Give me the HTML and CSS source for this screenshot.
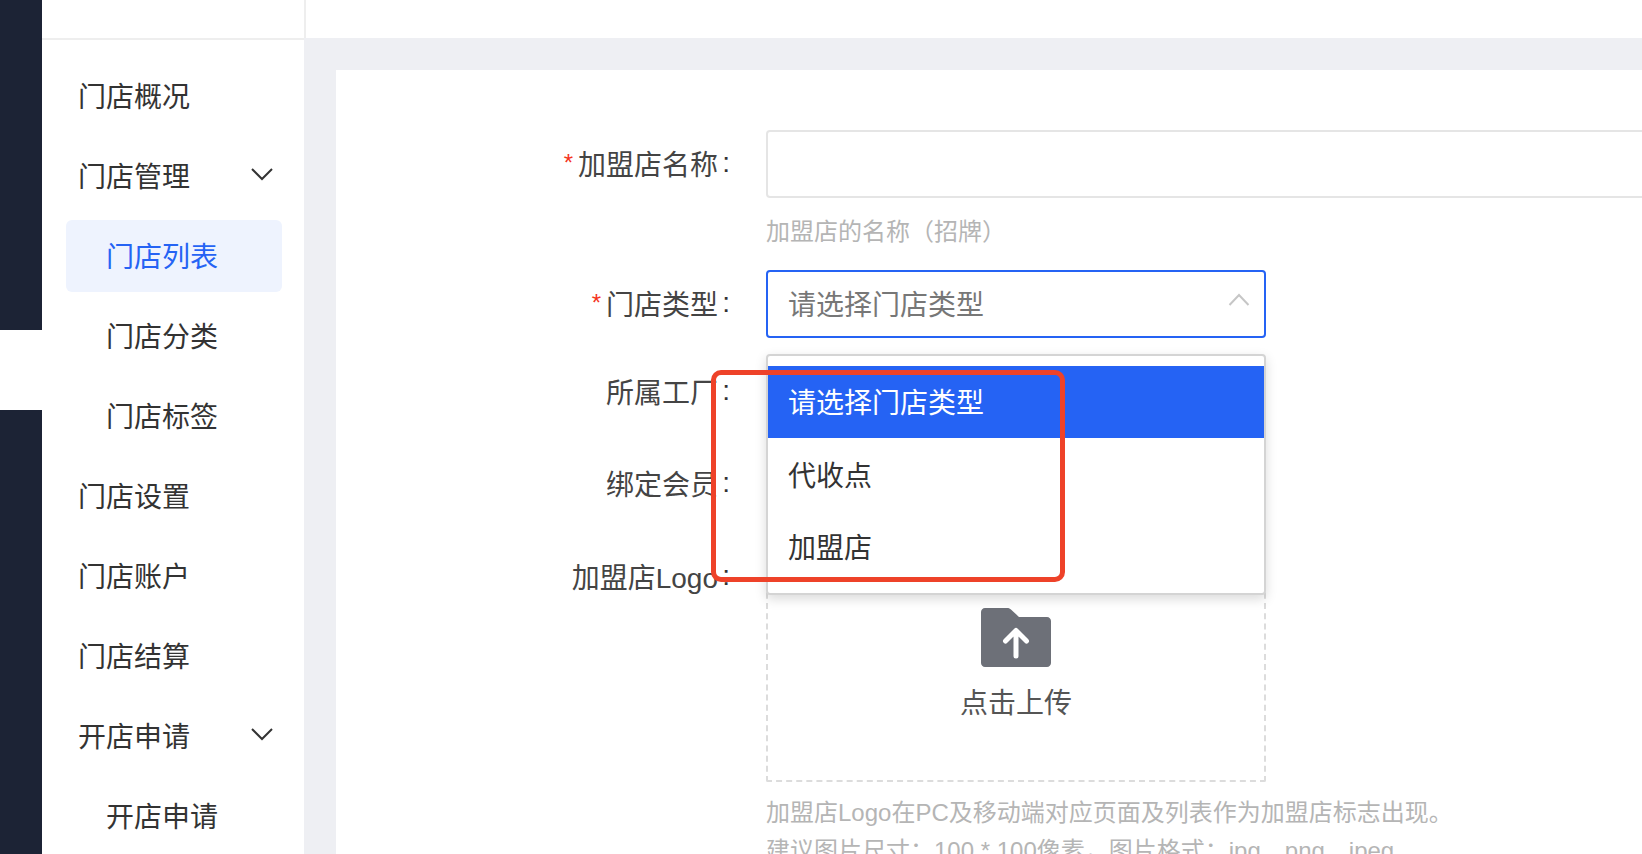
FILE: index.html
```html
<!DOCTYPE html>
<html lang="zh-CN">
<head>
<meta charset="utf-8">
<title>门店列表</title>
<link rel="stylesheet" href="styles.css">
</head>
<body>
<div class="app">
  <div class="rail">
    <div class="rail-top"></div>
    <div class="rail-active"></div>
    <div class="rail-rest"></div>
  </div>
  <div class="shell">
    <header class="topbar"><div class="topbar-brand"></div></header>
    <div class="body">
      <nav class="side">
        <div class="item"><span>门店概况</span></div>
        <div class="item"><span>门店管理</span>
          <svg class="chev" width="24" height="14" viewBox="0 0 24 14"><path d="M2 2l10 10L22 2" fill="none" stroke="#333" stroke-width="2"/></svg>
        </div>
        <div class="item sub active"><span>门店列表</span></div>
        <div class="item sub"><span>门店分类</span></div>
        <div class="item sub"><span>门店标签</span></div>
        <div class="item"><span>门店设置</span></div>
        <div class="item"><span>门店账户</span></div>
        <div class="item"><span>门店结算</span></div>
        <div class="item"><span>开店申请</span>
          <svg class="chev" width="24" height="14" viewBox="0 0 24 14"><path d="M2 2l10 10L22 2" fill="none" stroke="#333" stroke-width="2"/></svg>
        </div>
        <div class="item sub"><span>开店申请</span></div>
      </nav>
      <main class="main">
        <form class="panel">
          <div class="row row-name">
            <div class="label"><i class="req">*</i>加盟店名称<b class="colon">:</b></div>
            <div class="field">
              <div class="input wide"></div>
              <p class="hint">加盟店的名称（招牌）</p>
            </div>
          </div>
          <div class="row row-type">
            <div class="label"><i class="req">*</i>门店类型<b class="colon">:</b></div>
            <div class="field select-wrap">
              <div class="input select">
                <span class="placeholder">请选择门店类型</span>
                <svg class="up" width="22" height="13" viewBox="0 0 22 13"><path d="M1.5 12L11 2l9.500 10" fill="none" stroke="#c6c6c6" stroke-width="2"/></svg>
              </div>
              <ul class="dropdown">
                <li class="opt selected">请选择门店类型</li>
                <li class="opt">代收点</li>
                <li class="opt">加盟店</li>
              </ul>
            </div>
          </div>
          <div class="row row-factory">
            <div class="label">所属工厂<b class="colon">:</b></div>
            <div class="field"><div class="input"></div></div>
          </div>
          <div class="row row-member">
            <div class="label">绑定会员<b class="colon">:</b></div>
            <div class="field"><div class="input"></div></div>
          </div>
          <div class="row row-logo">
            <div class="label">加盟店Logo<b class="colon">:</b></div>
            <div class="field">
              <div class="upload">
                <svg width="70" height="59" viewBox="0 0 70 59"><path d="M4 0h22c2 0 3 .6 4.200 1.800L38 9h28c2.200 0 4 1.800 4 4v42c0 2.200-1.800 4-4 4H4c-2.200 0-4-1.800-4-4V4c0-2.200 1.800-4 4-4z" fill="#6d7078"/><path d="M35 48V23M24.500 33L35 22.500 45.500 33" fill="none" stroke="#fff" stroke-width="5" stroke-linecap="round" stroke-linejoin="round"/></svg>
                <span class="upload-text">点击上传</span>
              </div>
              <p class="hint hint-logo">加盟店Logo在PC及移动端对应页面及列表作为加盟店标志出现。<br>建议图片尺寸：100 * 100像素，图片格式：jpg、png、jpeg</p>
            </div>
          </div>
        </form>
      </main>
    </div>
  </div>
</div>
<div class="callout"></div>
</body>
</html>
```
FILE: styles.css
```css
* { box-sizing: border-box; }
html, body { margin: 0; height: 100%; overflow: hidden; background: #fff; }
body { font-family: "Liberation Sans", "Noto Sans CJK SC", sans-serif; color: #333; font-size: 28px; }
ul, p { margin: 0; padding: 0; list-style: none; }
i, b { font-style: normal; font-weight: 400; }

.app { display: flex; height: 854px; }
.rail { width: 42px; flex: none; display: flex; flex-direction: column; }
.rail-top { height: 330px; background: #1c2335; }
.rail-active { height: 80px; background: #fff; }
.rail-rest { flex: 1; background: #1c2335; }

.shell { flex: 1; display: flex; flex-direction: column; min-width: 0; }
.topbar { height: 38px; flex: none; background: #fff; }
.topbar-brand { width: 264px; height: 38px; border-right: 2px solid #eee; }
.body { flex: 1; display: flex; min-height: 0; }

.side { width: 262px; flex: none; background: #fff; border-top: 2px solid #eee; padding-top: 20px; overflow: hidden; display: flex; flex-direction: column; gap: 8px; }
.item { height: 72px; flex: none; margin: 0 22px 0 24px; padding-left: 12px; display: flex; align-items: center; justify-content: space-between; line-height: 40px; white-space: nowrap; border-radius: 6px; }
.item span { margin-top: 4px; }
.item.sub { padding-left: 40px; }
.item.active { background: #eef3fe; color: #2563f4; }
.chev { margin-right: 8px; margin-top: -5px; }

.main { flex: 1; min-width: 0; background: #eeeff3; padding: 32px 0 0 32px; overflow: hidden; }
.panel { background: #fff; height: 900px; padding-top: 60px; }

.row { display: flex; align-items: flex-start; }
.label { width: 430px; flex: none; height: 68px; padding-right: 36px; display: flex; align-items: center; justify-content: flex-end; white-space: nowrap; color: #444; margin-top: -1px; }
.req { color: #f5351e; font-size: 24px; margin-right: 5px; line-height: 1; }
.colon { width: 12px; text-align: right; color: #333; }
.field { width: 906px; flex: none; position: relative; }

.input { width: 500px; height: 68px; border: 2px solid #e5e5e5; border-radius: 4px; background: #fff; }
.input.wide { width: 100%; }
.row-type { margin-top: 20px; }
.row-factory { margin-top: 20px; }
.row-member { margin-top: 24px; }
.row-logo { margin-top: 24px; }
.row-logo .label { margin-top: 0; }

.hint { font-size: 24px; color: #b5b5b5; line-height: 36px; margin-top: 16px; }
.hint-logo { line-height: 38px; margin-top: 12px; white-space: nowrap; }

.select { border-color: #2563f4; display: flex; align-items: center; justify-content: space-between; padding: 0 14px 0 20px; }
.placeholder { color: #777; margin-top: -2px; }
.up { margin-top: -10px; }

.dropdown { position: absolute; z-index: 2; top: 84px; left: 0; width: 500px; background: #fff; border: 2px solid #d4d4d4; border-radius: 4px; padding: 10px 0 11px; box-shadow: 0 4px 12px rgba(0, 0, 0, .15); }
.opt { height: 72px; padding: 0 20px; display: flex; align-items: center; color: #333; }
.opt.selected { background: #2563f4; color: #fff; padding-bottom: 2px; }

.upload { width: 500px; height: 240px; border: 2px dashed #dcdcdc; border-radius: 2px; display: flex; flex-direction: column; align-items: center; padding-top: 64px; }
.upload-text { color: #555; line-height: 40px; margin-top: 17px; }

.callout { position: absolute; z-index: 3; left: 711px; top: 370px; width: 354px; height: 212px; border: 5px solid #ee4229; border-radius: 10px; }
```
